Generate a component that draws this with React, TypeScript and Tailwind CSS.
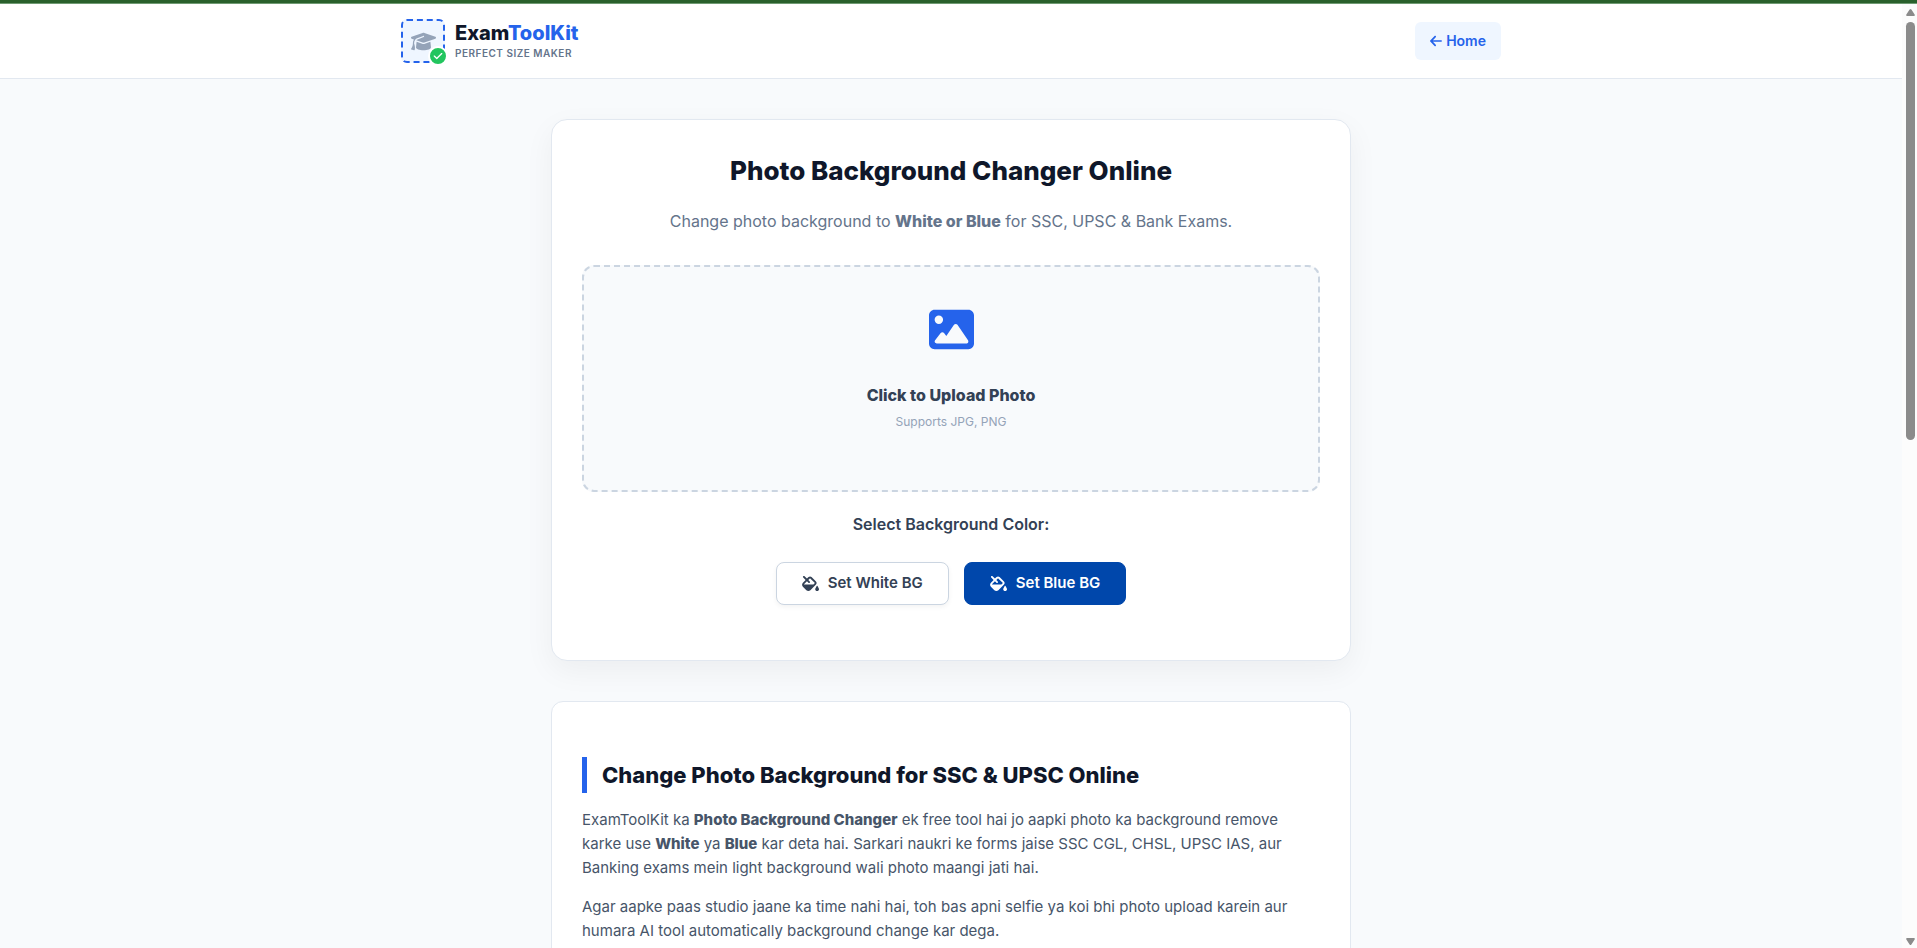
import { FaArrowLeft, FaCheck, FaFillDrip, FaGraduationCap, FaImage } from "react-icons/fa6";

function Logo() {
  return (
    <a href="#" className="flex items-center gap-2.5">
      <span className="relative flex size-11 items-center justify-center rounded-md border-2 border-dashed border-[#2563eb] bg-[#eff6ff] text-[#94a3b8]">
        <FaGraduationCap size={25} />
        <span className="absolute -right-[5px] -bottom-[5px] flex size-5 items-center justify-center rounded-full border-2 border-white bg-[#22c55e] text-white">
          <FaCheck size={10} />
        </span>
      </span>
      <span className="flex flex-col">
        <span className="text-xl leading-6 font-extrabold text-[#0f172a]">
          Exam<span className="text-[#2563eb]">ToolKit</span>
        </span>
        <span className="text-[10px] leading-4 font-semibold tracking-wider text-[#64748b]">PERFECT SIZE MAKER</span>
      </span>
    </a>
  );
}

function Header() {
  return (
    <header className="border-b border-[#e2e8f0] bg-white py-[15px]">
      <div className="mx-auto flex max-w-[1100px] items-center justify-between">
        <Logo />
        <a
          href="#"
          className="flex items-center gap-1 rounded-md bg-[#eff6ff] px-[15px] py-2 text-sm leading-[22px] font-semibold text-[#2563eb]"
        >
          <FaArrowLeft viewBox="0 0 448 512" className="h-3.5 w-3" />
          Home
        </a>
      </div>
    </header>
  );
}

function ToolCard() {
  return (
    <section className="rounded-2xl border border-[#e2e8f0] bg-white p-[30px] pb-[55px] text-center shadow-[0_10px_30px_rgba(0,0,0,0.05)]">
      <h1 className="mb-4 text-[26px] leading-[42px] font-extrabold text-[#0f172a]">Photo Background Changer Online</h1>
      <p className="mb-[31px] text-base leading-[26px] text-[#64748b]">
        Change photo background to <strong className="font-extrabold">White or Blue</strong> for SSC, UPSC &amp; Bank
        Exams.
      </p>
      <label className="flex cursor-pointer flex-col items-center rounded-xl border-2 border-dashed border-[#cbd5e1] bg-[#f8fafc] px-10 pt-10 pb-[58px]">
        <input type="file" accept="image/png,image/jpeg" className="hidden" />
        <FaImage size={45} className="mb-[30px] text-[#2563eb]" />
        <span className="text-base leading-[26px] font-extrabold text-[#334155]">Click to Upload Photo</span>
        <span className="mt-1 text-xs leading-5 text-[#94a3b8]">Supports JPG, PNG</span>
      </label>
      <h2 className="mt-[19px] mb-[25px] text-base leading-[26px] font-semibold text-[#334155]">
        Select Background Color:
      </h2>
      <div className="flex flex-wrap justify-center gap-[15px]">
        <button
          type="button"
          className="flex h-[43px] items-center gap-[9px] rounded-lg border border-[#cbd5e1] bg-white px-[25px] text-[15px] font-semibold text-[#334155] shadow-[0_2px_5px_rgba(0,0,0,0.05)]"
        >
          <FaFillDrip size={17} />
          Set White BG
        </button>
        <button
          type="button"
          className="flex h-[43px] items-center gap-[9px] rounded-lg border border-[#0047ab] bg-[#0047ab] px-[25px] text-[15px] font-semibold text-white"
        >
          <FaFillDrip size={17} />
          Set Blue BG
        </button>
      </div>
    </section>
  );
}

function Article() {
  return (
    <article className="mt-10 rounded-xl border border-[#e2e8f0] bg-white p-[30px] pt-[55px] text-[15px] leading-6 text-[#475569]">
      <h2 className="mb-[15px] border-l-[5px] border-[#2563eb] pl-[15px] text-[22px] leading-9 font-extrabold text-[#0f172a]">
        Change Photo Background for SSC &amp; UPSC Online
      </h2>
      <p className="mb-[15px] pr-2">
        ExamToolKit ka <strong className="font-extrabold">Photo Background Changer</strong> ek free tool hai jo aapki
        photo ka background remove karke use <strong className="font-extrabold">White</strong> ya{" "}
        <strong className="font-extrabold">Blue</strong> kar deta hai. Sarkari naukri ke forms jaise SSC CGL, CHSL,
        UPSC IAS, aur Banking exams mein light background wali photo maangi jati hai.
      </p>
      <p className="pr-2">
        Agar aapke paas studio jaane ka time nahi hai, toh bas apni selfie ya koi bhi photo upload karein aur humara AI
        tool automatically background change kar dega.
      </p>
    </article>
  );
}

function ScrollRail() {
  return (
    <div
      aria-hidden="true"
      className="flex w-[15px] flex-col items-center bg-[#fcfcfc] pt-[5px] pb-[3px] pl-0.5 text-[#8b8b8b]"
    >
      <svg width="9" height="7" viewBox="0 0 9 7" fill="currentColor">
        <path d="M4.5 0Q5 0 5.4.6L8.8 5.7Q9 7 8 7H1Q0 7 .2 5.7L3.6.6Q4 0 4.5 0Z" />
      </svg>
      <div className="mt-1.5 flex w-full flex-1 flex-col items-center">
        <div className="h-[45.6%] w-[9px] rounded-full bg-[#8b8b8b]" />
      </div>
      <svg width="9" height="7" viewBox="0 0 9 7" fill="currentColor">
        <path d="M4.5 7Q5 7 5.4 6.4L8.8 1.3Q9 0 8 0H1Q0 0 .2 1.3L3.6 6.4Q4 7 4.5 7Z" />
      </svg>
    </div>
  );
}

export default function App() {
  return (
    <div className="flex h-screen flex-col bg-[#f8fafc] font-['Inter',sans-serif]">
      <div className="h-1 shrink-0 border-b border-[#6f9a73] bg-[#29602c]" />
      <div className="flex min-h-0 flex-1">
        <div className="flex-1 overflow-y-auto [scrollbar-width:none]">
          <Header />
          <main className="mx-auto my-10 max-w-[800px]">
            <ToolCard />
            <Article />
          </main>
        </div>
        <ScrollRail />
      </div>
    </div>
  );
}
